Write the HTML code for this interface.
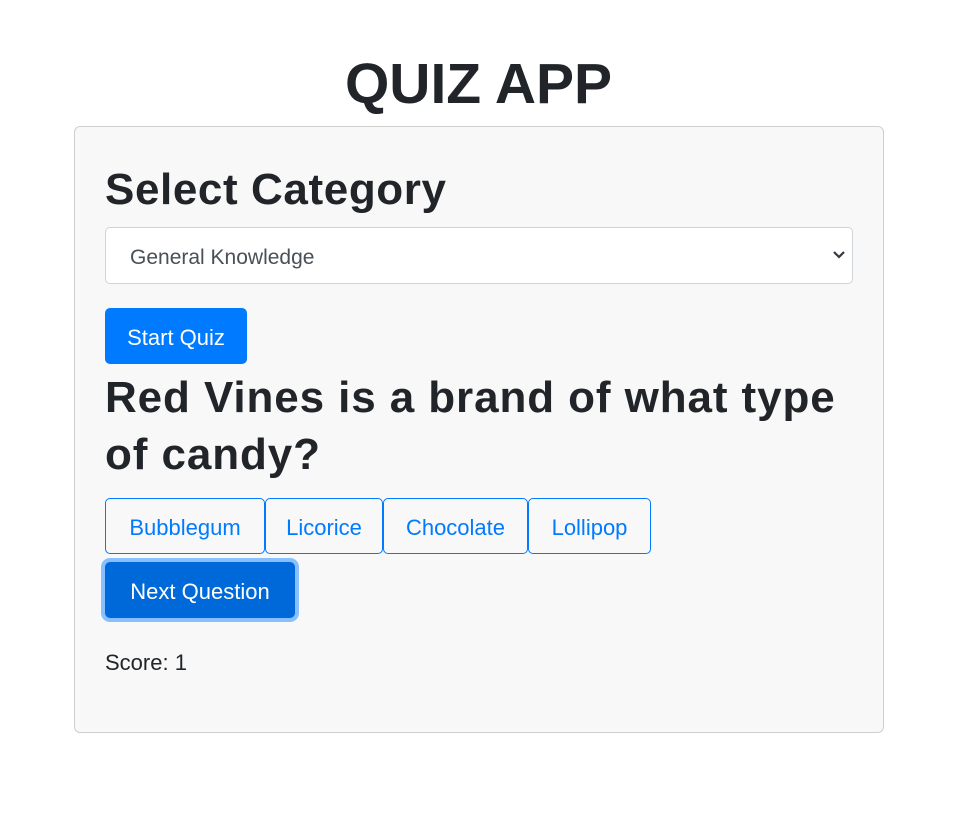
<!DOCTYPE html>
<html><head><meta charset="utf-8"><style>
*{box-sizing:border-box;margin:0;padding:0}
body{width:953px;height:822px;background:#fff;font-family:"Liberation Sans",sans-serif;color:#212529;position:relative;overflow:hidden}
.a{position:absolute;white-space:nowrap}
h1{position:absolute;left:0;width:953px;text-align:center;top:48px;font-size:57px;font-weight:bold;line-height:72px;padding-left:4px}
.card{position:absolute;left:74px;top:126px;width:810px;height:607px;background:#f8f8f8;border:1px solid #cfcfcf;border-radius:6px}
.h2{font-size:44px;font-weight:bold;line-height:57px}
.btn{position:absolute;display:flex;align-items:center;justify-content:center;font-size:22px;border-radius:5px;height:56px;padding-top:4px}
.o{border:1px solid #007bff;color:#007bff;background:transparent}
</style></head><body>
<h1>QUIZ APP</h1>
<div class="card"></div>
<div class="a h2" style="left:105px;top:161px;letter-spacing:0.6px">Select Category</div>
<div class="a" style="left:105px;top:227px;width:748px;height:57px;background:#fff;border:1px solid #ced4da;border-radius:5px"></div>
<div class="a" style="left:130px;top:244px;font-size:21px;color:#495057;line-height:28px">General Knowledge</div>
<svg class="a" style="left:832px;top:250px" width="14" height="10" viewBox="0 0 14 10"><path d="M2 2 L7 7 L12 2" fill="none" stroke="#343a40" stroke-width="2.2"/></svg>
<div class="btn" style="left:105px;top:308px;width:142px;background:#007bff;color:#fff">Start Quiz</div>
<div class="a h2" style="left:105px;top:369px;letter-spacing:0.9px">Red Vines is a brand of what type</div>
<div class="a h2" style="left:105px;top:426px;letter-spacing:0.9px">of candy?</div>
<div class="btn o" style="left:105px;top:498px;width:160px">Bubblegum</div>
<div class="btn o" style="left:265px;top:498px;width:118px">Licorice</div>
<div class="btn o" style="left:383px;top:498px;width:145px">Chocolate</div>
<div class="btn o" style="left:528px;top:498px;width:123px">Lollipop</div>
<div class="btn" style="left:105px;top:562px;width:190px;background:#0069d9;color:#fff;box-shadow:0 0 0 4px #88c0ff">Next Question</div>
<div class="a" style="left:105px;top:649px;font-size:22px;line-height:28px">Score: 1</div>
</body></html>
